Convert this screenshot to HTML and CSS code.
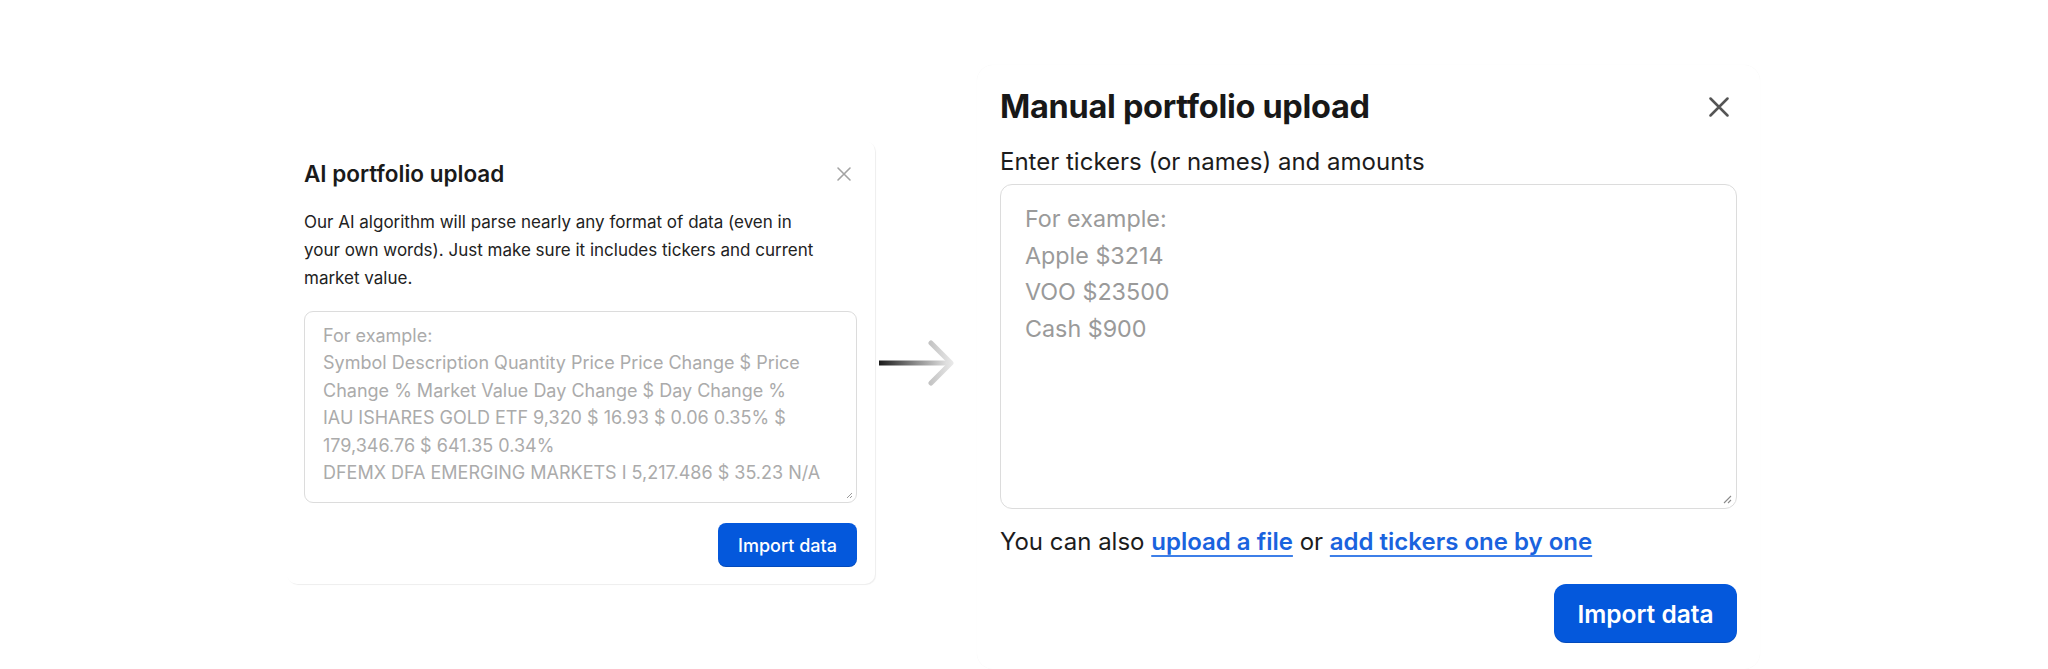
FILE: index.html
```html
<!DOCTYPE html>
<html lang="en">
<head>
<meta charset="utf-8">
<title>Portfolio upload</title>
<link rel="stylesheet" href="styles.css">
</head>
<body>
<main class="stage">
  <section class="card card-ai">
    <header class="card-head">
      <h2 class="ai-title">AI portfolio upload</h2>
      <button class="close close-ai" aria-label="Close">
        <svg viewBox="0 0 16 16" width="16" height="16"><path d="M2 2L14 14M14 2L2 14" stroke="currentColor" stroke-width="1.6" stroke-linecap="round" fill="none"/></svg>
      </button>
    </header>
    <p class="ai-text">Our AI algorithm will parse nearly any format of data (even in<br>your own words). Just make sure it includes tickers and current<br>market value.</p>
    <div class="field field-ai">
      <span>For example:</span>
      <span>Symbol Description Quantity Price Price Change $ Price</span>
      <span>Change % Market Value Day Change $ Day Change %</span>
      <span>IAU ISHARES GOLD ETF 9,320 $ 16.93 $ 0.06 0.35% $</span>
      <span>179,346.76 $ 641.35 0.34%</span>
      <span>DFEMX DFA EMERGING MARKETS I 5,217.486 $ 35.23 N/A</span>
      <svg class="grip" viewBox="0 0 8 8" width="8" height="8"><path d="M7 2L2 7M7 5L5 7" stroke="#9a9a9a" stroke-width="1" fill="none"/></svg>
    </div>
    <div class="actions">
      <button class="btn btn-ai">Import data</button>
    </div>
  </section>

  <svg class="arrow" viewBox="0 0 78 46" width="78" height="46">
    <defs>
      <linearGradient id="ag" gradientUnits="userSpaceOnUse" x1="2" y1="0" x2="76" y2="0">
        <stop offset="0" stop-color="#1a1a1a"/>
        <stop offset="0.5" stop-color="#8c8c8c"/>
        <stop offset="1" stop-color="#f2f2f2"/>
      </linearGradient>
      <linearGradient id="ah" gradientUnits="userSpaceOnUse" x1="52" y1="0" x2="78" y2="0">
        <stop offset="0" stop-color="#c2c2c2"/>
        <stop offset="1" stop-color="#ececec"/>
      </linearGradient>
    </defs>
    <rect x="2" y="20.5" width="72" height="5" fill="url(#ag)"/>
    <path d="M54 3L74 23L54 43" stroke="url(#ah)" stroke-width="5" stroke-linecap="round" stroke-linejoin="round" fill="none"/>
  </svg>

  <section class="card card-manual">
    <header class="card-head">
      <h2 class="m-title">Manual portfolio upload</h2>
      <button class="close close-m" aria-label="Close">
        <svg viewBox="0 0 20 20" width="20" height="20"><path d="M1.5 1.5L18.5 18.5M18.5 1.5L1.5 18.5" stroke="currentColor" stroke-width="2.5" stroke-linecap="round" fill="none"/></svg>
      </button>
    </header>
    <label class="m-label">Enter tickers (or names) and amounts</label>
    <div class="field field-m">
      <span>For example:</span>
      <span>Apple $3214</span>
      <span>VOO $23500</span>
      <span>Cash $900</span>
      <svg class="grip grip-m" viewBox="0 0 10 10" width="10" height="10"><path d="M9 2L2 9M9 6L6 9" stroke="#8a8a8a" stroke-width="1.1" fill="none"/></svg>
    </div>
    <p class="m-alt">You can also <a href="#" class="link">upload a file</a> or <a href="#" class="link">add tickers one by one</a></p>
    <div class="actions">
      <button class="btn btn-m">Import data</button>
    </div>
  </section>
</main>
</body>
</html>
```

FILE: styles.css
```css
* { box-sizing: border-box; }

html, body {
  margin: 0;
  padding: 0;
  background: #ffffff;
}

body {
  font-family: Inter, "Noto Sans", "Liberation Sans", sans-serif;
  color: #1b1b1b;
  width: 2048px;
  height: 669px;
  overflow: hidden;
}

.stage {
  display: flex;
  align-items: center;
  height: 669px;
  padding: 65px 0 0 287px;
}

.card {
  background: #fff;
  display: flex;
  flex-direction: column;
  flex: none;
}

.card-ai {
  width: 588px;
  height: 443px;
  margin-bottom: 9px;
  padding: 19px 18px 17px 17px;
  border-radius: 10px;
  box-shadow: 1px 1px 1px rgba(0, 0, 0, 0.07);
}

.card-manual {
  width: 783px;
  height: 604px;
  padding: 22px 23px 26px 23px;
  border-radius: 16px;
  box-shadow: 0 0 1px rgba(0, 0, 0, 0.06);
}

.card-head {
  display: flex;
  align-items: center;
  justify-content: space-between;
}

h2 { margin: 0; }

.ai-title {
  font-size: 22.5px;
  line-height: 28px;
  font-weight: 600;
  color: #1a1a1a;
}

.m-title {
  font-size: 32.5px;
  line-height: 40px;
  font-weight: 700;
  color: #181818;
  letter-spacing: -0.3px;
}

.close {
  border: 0;
  background: none;
  padding: 0;
  display: flex;
  cursor: pointer;
}

.close-ai {
  color: #a3a3a3;
  margin-right: 5px;
}

.close-m {
  color: #555;
  margin-right: 8px;
}

.ai-text {
  margin: 20px 0 19px;
  font-size: 17px;
  line-height: 28px;
  color: #222;
  white-space: nowrap;
}

.field {
  position: relative;
  display: flex;
  flex-direction: column;
  border: 1px solid #dcdcdc;
  white-space: nowrap;
}

.field-ai {
  height: 192px;
  padding: 10px 18px 0;
  border-radius: 9px;
  font-size: 18px;
  line-height: 27.4px;
  color: #ababab;
}

.field-m {
  height: 325px;
  margin-top: 7px;
  padding: 16px 24px 0;
  border-radius: 12px;
  font-size: 23.3px;
  line-height: 36.5px;
  color: #9a9a9a;
}

.grip {
  position: absolute;
  right: 3px;
  bottom: 3px;
}

.grip-m {
  right: 4px;
  bottom: 4px;
}

.actions {
  display: flex;
  justify-content: flex-end;
}

.btn {
  border: 0;
  background: #0458dc;
  color: #fff;
  font-family: inherit;
  cursor: pointer;
  box-shadow: inset 0 -1px 0 rgba(0, 0, 0, 0.15);
}

.btn-ai {
  margin-top: 20px;
  width: 139px;
  height: 44px;
  border-radius: 8px;
  font-size: 18px;
  font-weight: 500;
}

.btn-m {
  margin-top: 27px;
  width: 183px;
  height: 59px;
  border-radius: 12px;
  font-size: 24.5px;
  font-weight: 600;
}

.m-label {
  margin-top: 20px;
  font-size: 24px;
  line-height: 30px;
  color: #1c1c1c;
}

.m-alt {
  margin: 18px 0 0;
  font-size: 24px;
  line-height: 30px;
  color: #1c1c1c;
}

.link {
  color: #1a63de;
  font-weight: 600;
  text-decoration: underline;
  text-decoration-thickness: 2px;
  text-underline-offset: 5px;
  text-decoration-color: #3d7fe8;
}

.arrow {
  flex: none;
  margin: 0 22px 8px 2px;
}
```
